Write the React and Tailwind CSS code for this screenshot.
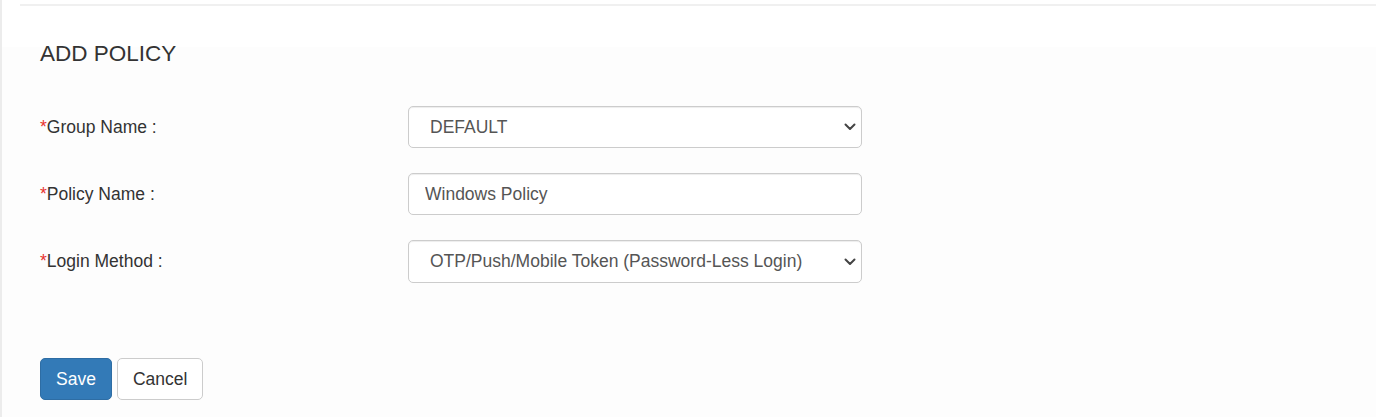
import React, { useState } from 'react';

const Chevron = () => (
    <svg
        className="pointer-events-none absolute right-[6px] top-1/2 -translate-y-1/2"
        width="12"
        height="8"
        viewBox="0 0 12 8"
        fill="none"
    >
        <path d="M1.5 1.5l4.5 4.5 4.5-4.5" stroke="#444" strokeWidth="2" strokeLinecap="round" strokeLinejoin="round" />
    </svg>
);

const FieldLabel = ({ children }) => (
    <label className="w-[368px] shrink-0 text-[17.5px] text-[#333]">
        <span className="text-[#e8312f]">*</span>
        {children}
    </label>
);

const App = () => {
    const [group, setGroup] = useState('DEFAULT');
    const [policyName, setPolicyName] = useState('Windows Policy');
    const [method, setMethod] = useState('otp');

    return (
        <div className="h-[417px] w-full border-l-2 border-[#ececec] bg-[linear-gradient(to_bottom,#fff_47px,#fdfdfd_47px)] font-['Liberation_Sans',Arial,sans-serif]">
            {/* top divider */}
            <div className="pt-1">
                <div className="ml-[18px] h-[2px] bg-[#f0f0f0]" />
            </div>

            <div className="pl-[38px]">
                <h3 className="mt-[35px] text-[22.5px] leading-[25px] text-[#333]">ADD POLICY</h3>

                <form className="mt-[40px] flex flex-col gap-[25px]" onSubmit={(e) => e.preventDefault()}>
                    <div className="flex items-center">
                        <FieldLabel>Group Name :</FieldLabel>
                        <div className="relative w-[454px]">
                            <select
                                value={group}
                                onChange={(e) => setGroup(e.target.value)}
                                className="h-[42px] w-full appearance-none rounded-[5px] border border-[#ccc] bg-white pl-[21px] pr-8 text-[17.5px] text-[#555] shadow-[inset_0_1px_1px_rgba(0,0,0,0.075)] outline-none"
                            >
                                <option value="DEFAULT">DEFAULT</option>
                            </select>
                            <Chevron />
                        </div>
                    </div>

                    <div className="flex items-center">
                        <FieldLabel>Policy Name :</FieldLabel>
                        <input
                            type="text"
                            value={policyName}
                            onChange={(e) => setPolicyName(e.target.value)}
                            className="h-[42px] w-[454px] rounded-[5px] border border-[#ccc] bg-white pl-[16px] pr-3 text-[17.5px] text-[#555] shadow-[inset_0_1px_1px_rgba(0,0,0,0.075)] outline-none"
                        />
                    </div>

                    <div className="flex items-center">
                        <FieldLabel>Login Method :</FieldLabel>
                        <div className="relative w-[454px]">
                            <select
                                value={method}
                                onChange={(e) => setMethod(e.target.value)}
                                className="h-[43px] w-full appearance-none rounded-[5px] border border-[#ccc] bg-white pl-[21px] pr-8 text-[17.5px] text-[#555] shadow-[inset_0_1px_1px_rgba(0,0,0,0.075)] outline-none"
                            >
                                <option value="otp">OTP/Push/Mobile Token (Password-Less Login)</option>
                                <option value="password">Password + 2nd Factor</option>
                            </select>
                            <Chevron />
                        </div>
                    </div>

                    <div className="mt-[50px] flex gap-[5px]">
                        <button
                            type="submit"
                            className="h-[42px] rounded-[5px] border border-[#2e6da4] bg-[#337ab7] px-[15px] text-[17.5px] text-white"
                        >
                            Save
                        </button>
                        <button
                            type="button"
                            className="h-[42px] rounded-[5px] border border-[#ccc] bg-white px-[15px] text-[17.5px] text-[#333]"
                        >
                            Cancel
                        </button>
                    </div>
                </form>
            </div>
        </div>
    );
};

export default App;
